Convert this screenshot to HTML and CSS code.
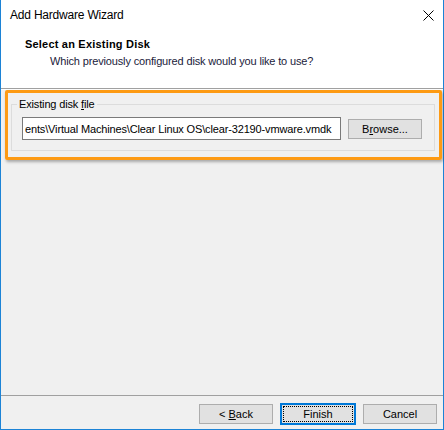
FILE: index.html
```html
<!DOCTYPE html>
<html>

<head>
    <title>Add Hardware Wizard</title>
    <link rel="stylesheet" href="styles.css">
</head>

<body>
    <div class="window">
        <div class="titlebar">
            <span class="title">Add Hardware Wizard</span>
            <svg class="close" width="11" height="11" viewBox="0 0 11 11">
                <path d="M0.5 0.5 L10.5 10.5 M10.5 0.5 L0.5 10.5" stroke="#000" stroke-width="1" fill="none"/>
            </svg>
        </div>
        <div class="header">
            <div class="header-title">Select an Existing Disk</div>
            <div class="header-sub">Which previously configured disk would you like to use?</div>
        </div>
        <div class="content">
            <div class="highlight">
                <fieldset class="group">
                    <legend>Existing disk <u>f</u>ile</legend>
                    <div class="row">
                        <div class="path-input">ents\Virtual Machines\Clear Linux OS\clear-32190-vmware.vmdk</div>
                        <button class="btn">B<u>r</u>owse...</button>
                    </div>
                </fieldset>
            </div>
        </div>
        <div class="footer">
            <button class="btn">&lt; <u>B</u>ack</button>
            <button class="btn btn-default"><span class="focus">Finish</span></button>
            <button class="btn">Cancel</button>
        </div>
    </div>
</body>

</html>
```
FILE: styles.css
```css
body {
    margin: 0;
    font-family: "Liberation Sans", Arial, sans-serif;
    font-size: 11px;
    letter-spacing: -0.15px;
    color: #000;
    background: #fff;
}

.window {
    width: 444px;
    height: 430px;
    box-sizing: border-box;
    border: 1px solid #1c83d6;
    border-top: none;
    background: #f0f0f0;
    display: flex;
    flex-direction: column;
}

.titlebar {
    height: 31px;
    background: #fff;
    display: flex;
    align-items: center;
    justify-content: space-between;
    padding: 0 9px 0 8px;
}

.title {
    font-size: 12px;
    letter-spacing: -0.2px;
    padding: 0 0 1px 1px;
}

.close {
    margin-bottom: 1px;
}

.header {
    height: 52px;
    background: #fff;
    border-bottom: 1px solid #a0a0a0;
    box-shadow: 0 1px 0 #fff;
    padding: 5px 0 0 24px;
    box-sizing: content-box;
    line-height: 17px;
}

.header-title {
    font-weight: bold;
    letter-spacing: 0.2px;
}

.header-sub {
    margin-left: 25px;
    color: #1a1a3a;
}

.content {
    flex: 1;
    padding: 1px 0 0 4px;
}

.highlight {
    width: 437px;
    height: 70px;
    box-sizing: border-box;
    border: 3px solid #fd9a13;
    border-radius: 2px;
    box-shadow: 1px 2px 3px rgba(0, 0, 0, 0.3);
    padding: 4px 4px 0 3px;
}

.group {
    margin: 0;
    padding: 5px 11px 10px 10px;
    border: 1px solid #dcdcdc;
    min-width: 0;
}

.group legend {
    padding: 0 2px;
    margin-left: -5px;
    line-height: 15px;
}

.row {
    display: flex;
    align-items: center;
    gap: 7px;
}

.path-input {
    width: 319px;
    height: 23px;
    box-sizing: border-box;
    border: 1px solid #7a7a7a;
    background: #fff;
    overflow: hidden;
    white-space: nowrap;
    display: flex;
    align-items: center;
    padding-left: 2px;
}

.btn {
    width: 74px;
    height: 20px;
    box-sizing: border-box;
    border: 1px solid #adadad;
    background: #e1e1e1;
    font-family: "Liberation Sans", Arial, sans-serif;
    font-size: 11px;
    letter-spacing: 0;
    color: #000;
    padding: 0;
    margin: 0;
}

.footer {
    border-top: 1px solid #a0a0a0;
    height: 34px;
    box-sizing: border-box;
    display: flex;
    justify-content: flex-end;
    align-items: flex-start;
    gap: 8px;
    padding: 8px 6px 0 0;
}

.btn-default {
    border-color: #0078d7;
    box-shadow: 0 0 0 1px #0078d7;
    display: flex;
    padding: 1px;
}

.focus {
    flex: 1;
    border: 1px dotted #000;
    display: flex;
    align-items: center;
    justify-content: center;
}
```
